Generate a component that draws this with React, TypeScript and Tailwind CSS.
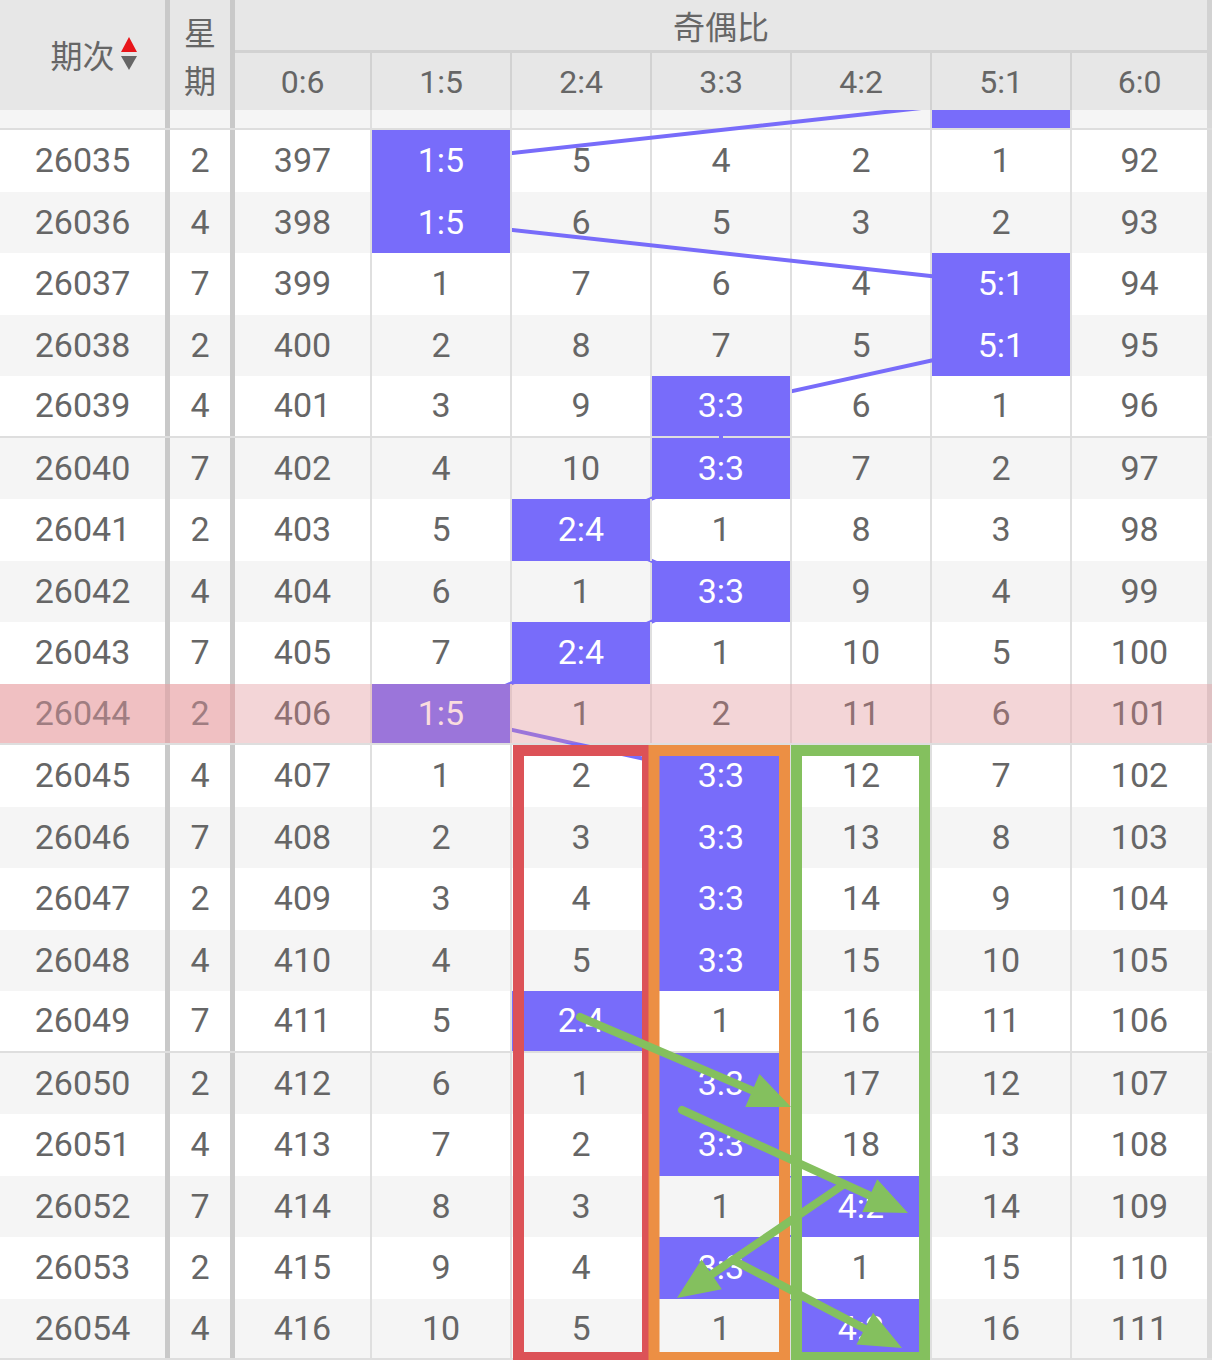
import React from "react";

// 奇偶比 走势表
const labels = ["0:6", "1:5", "2:4", "3:3", "4:2", "5:1", "6:0"];

// [期次, 星期, 各比例遗漏值] — 0 = 当期开出
const rows: [number, number, number[]][] = [
  [26034, 7, [396, 3, 4, 3, 1, 0, 91]],
  [26035, 2, [397, 0, 5, 4, 2, 1, 92]],
  [26036, 4, [398, 0, 6, 5, 3, 2, 93]],
  [26037, 7, [399, 1, 7, 6, 4, 0, 94]],
  [26038, 2, [400, 2, 8, 7, 5, 0, 95]],
  [26039, 4, [401, 3, 9, 0, 6, 1, 96]],
  [26040, 7, [402, 4, 10, 0, 7, 2, 97]],
  [26041, 2, [403, 5, 0, 1, 8, 3, 98]],
  [26042, 4, [404, 6, 1, 0, 9, 4, 99]],
  [26043, 7, [405, 7, 0, 1, 10, 5, 100]],
  [26044, 2, [406, 0, 1, 2, 11, 6, 101]],
  [26045, 4, [407, 1, 2, 0, 12, 7, 102]],
  [26046, 7, [408, 2, 3, 0, 13, 8, 103]],
  [26047, 2, [409, 3, 4, 0, 14, 9, 104]],
  [26048, 4, [410, 4, 5, 0, 15, 10, 105]],
  [26049, 7, [411, 5, 0, 1, 16, 11, 106]],
  [26050, 2, [412, 6, 1, 0, 17, 12, 107]],
  [26051, 4, [413, 7, 2, 0, 18, 13, 108]],
  [26052, 7, [414, 8, 3, 1, 0, 14, 109]],
  [26053, 2, [415, 9, 4, 0, 1, 15, 110]],
  [26054, 4, [416, 10, 5, 1, 0, 16, 111]],
];

const bodyCol = [
  "w-[137px] border-r-2",
  "w-[140px] border-r-2",
  "w-[140px] border-r-2",
  "w-[140px] border-r-2",
  "w-[140px] border-r-2",
  "w-[140px] border-r-2",
  "w-[140px] border-r-[5px]",
];

const centers = [302.5, 441, 581, 721, 861, 1001, 1139.5];

const GREEN = "#84c05e";

const Arrow = ({ x1, y1, x2, y2 }: { x1: number; y1: number; x2: number; y2: number }) => {
  const dx = x2 - x1;
  const dy = y2 - y1;
  const len = Math.hypot(dx, dy);
  const ux = dx / len;
  const uy = dy / len;
  const hl = 42;
  const hw = 18;
  const bx = x2 - ux * hl;
  const by = y2 - uy * hl;
  const pts = `${x2},${y2} ${bx - uy * hw},${by + ux * hw} ${bx + uy * hw},${by - ux * hw}`;
  return (
    <g>
      <line
        x1={x1}
        y1={y1}
        x2={bx + ux * 4}
        y2={by + uy * 4}
        stroke={GREEN}
        strokeWidth={8}
        strokeLinecap="round"
      />
      <polygon points={pts} fill={GREEN} />
    </g>
  );
};

const App = () => {
  const trend = rows
    .map(([, , v], k) => `${centers[v.indexOf(0)]},${99.25 + 61.5 * k}`)
    .join(" ");

  return (
    <div className="relative w-[1212px] h-[1360px] overflow-hidden bg-white text-[#666] font-['Roboto','Noto_Sans_CJK_SC',sans-serif]">
      {/* header */}
      <div className="relative z-40 flex h-[110px] bg-[#e7e7e7]">
        <div className="w-[170px] border-r-[5px] border-[#c9c9c9] flex items-center justify-center pb-[2px] text-[32px] font-['Noto_Sans_CJK_SC',sans-serif]">
          <span className="relative leading-none">
            期次
            <svg
              className="absolute left-full top-1/2 -translate-y-1/2 ml-[6px]"
              width="16"
              height="34"
              viewBox="0 0 16 34"
            >
              <polygon points="8,0 16,15 0,15" fill="#e8161b" />
              <polygon points="0,19 16,19 8,33" fill="#666" />
            </svg>
          </span>
        </div>
        <div className="w-[65px] border-r-[5px] border-[#c9c9c9] flex flex-col items-center justify-center text-[32px] leading-[48px] font-['Noto_Sans_CJK_SC',sans-serif]">
          <span>星</span>
          <span>期</span>
        </div>
        <div className="flex-1 flex flex-col">
          <div className="h-[53px] flex items-center justify-center border-b-[3px] border-r-[5px] border-[#d2d2d2] text-[32px] font-['Noto_Sans_CJK_SC',sans-serif]">
            奇偶比
          </div>
          <div className="flex flex-1">
            {labels.map((l, i) => (
              <div
                key={l}
                className={`${bodyCol[i]} border-[#d2d2d2] flex items-center justify-center text-[32px]`}
              >
                {l}
              </div>
            ))}
          </div>
        </div>
      </div>

      {/* trend line */}
      <svg className="absolute left-0 top-0 z-10 pointer-events-none" width="1212" height="1360">
        <polyline points={trend} fill="none" stroke="#786cfa" strokeWidth={4} strokeLinejoin="round" />
      </svg>

      {/* body: first row scrolled mostly under the header */}
      <div className="h-[1250px] overflow-hidden">
        <div className="-mt-[41.5px]">
          {rows.map(([no, wk, vals], k) => {
            const even = no % 2 === 0;
            const sep = no % 5 === 4;
            const hot = no === 26044;
            const show = k > 0;
            return (
              <div
                key={no}
                className={`relative flex h-[61.5px] text-[34px] ${even ? "bg-[#f5f5f5]" : "bg-white"} ${
                  sep ? "border-b-2 border-[#dedede]" : ""
                }`}
              >
                <div
                  className={`w-[170px] border-r-[5px] flex items-center justify-center ${
                    hot ? "bg-[#f0c0c2] border-[#dcafb1] text-[#a07d81]" : "border-[#c9c9c9]"
                  }`}
                >
                  {show && no}
                </div>
                <div
                  className={`w-[65px] border-r-[5px] flex items-center justify-center ${
                    hot ? "bg-[#f0c0c2] border-[#dcafb1] text-[#a07d81]" : "border-[#c9c9c9]"
                  }`}
                >
                  {show && wk}
                </div>
                {vals.map((v, i) => (
                  <div
                    key={i}
                    className={`${bodyCol[i]} ${i === 6 ? "border-[#d9d9d9]" : "border-[#dfdfdf]"} flex items-center justify-center ${
                      v === 0 ? "relative z-20 bg-[#786cfa] text-white" : ""
                    }`}
                  >
                    {show && (v === 0 ? labels[i] : v)}
                  </div>
                ))}
                {hot && (
                  <div className="absolute left-[235px] right-0 top-0 bottom-0 z-30 bg-[rgba(238,140,147,0.3)] pointer-events-none" />
                )}
              </div>
            );
          })}
        </div>
      </div>

      {/* marks */}
      <svg className="absolute left-0 top-0 z-50 pointer-events-none" width="1212" height="1360">
        <rect x={518.5} y={750.5} width={129} height={607} fill="none" stroke="#dc5257" strokeWidth={11} />
        <rect x={654} y={750.5} width={130.5} height={607} fill="none" stroke="#ec8f44" strokeWidth={11} />
        <rect x={796.5} y={750.5} width={128} height={607} fill="none" stroke={GREEN} strokeWidth={11} />
        <Arrow x1={580} y1={1017} x2={791} y2={1107} />
        <Arrow x1={682} y1={1110} x2={908} y2={1213} />
        <Arrow x1={843} y1={1185} x2={677} y2={1298} />
        <Arrow x1={733} y1={1260} x2={902} y2={1348} />
      </svg>
    </div>
  );
};

export default App;
